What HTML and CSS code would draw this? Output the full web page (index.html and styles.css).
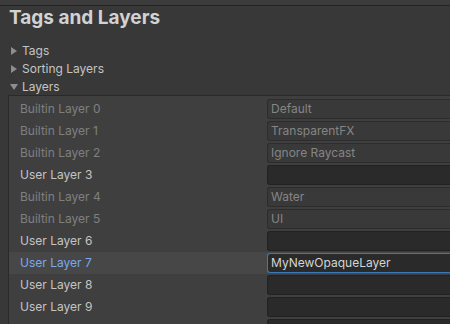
FILE: index.html
```html
<!DOCTYPE html>
<html lang="en">
<head>
  <meta charset="UTF-8">
  <link rel="stylesheet" href="styles.css">
</head>
<body>
<div class="topBar"></div>
<h1 class="title">Tags and Layers</h1>

<div class="foldouts">
    <div class="foldout">
        <svg class="arrow" width="8" height="10" viewBox="0 0 8 10"><polygon points="1,1 7,5 1,9" /></svg>
        <span>Tags</span>
    </div>
    <div class="foldout">
        <svg class="arrow" width="8" height="10" viewBox="0 0 8 10"><polygon points="1,1 7,5 1,9" /></svg>
        <span>Sorting Layers</span>
    </div>
    <div class="foldout">
        <svg class="arrow" width="8" height="10" viewBox="0 0 8 10"><polygon points="0,2 8,2 4,8" /></svg>
        <span>Layers</span>
    </div>
</div>

<div class="layerList">
    <div class="layerRow builtin">
        <span class="layerLabel">Builtin Layer 0</span>
        <div class="layerField">Default</div>
    </div>
    <div class="layerRow builtin">
        <span class="layerLabel">Builtin Layer 1</span>
        <div class="layerField">TransparentFX</div>
    </div>
    <div class="layerRow builtin">
        <span class="layerLabel">Builtin Layer 2</span>
        <div class="layerField">Ignore Raycast</div>
    </div>
    <div class="layerRow">
        <span class="layerLabel">User Layer 3</span>
        <div class="layerField"></div>
    </div>
    <div class="layerRow builtin">
        <span class="layerLabel">Builtin Layer 4</span>
        <div class="layerField">Water</div>
    </div>
    <div class="layerRow builtin">
        <span class="layerLabel">Builtin Layer 5</span>
        <div class="layerField">UI</div>
    </div>
    <div class="layerRow">
        <span class="layerLabel">User Layer 6</span>
        <div class="layerField"></div>
    </div>
    <div class="layerRow selected">
        <span class="layerLabel">User Layer 7</span>
        <div class="layerField">MyNewOpaqueLayer</div>
    </div>
    <div class="layerRow">
        <span class="layerLabel">User Layer 8</span>
        <div class="layerField"></div>
    </div>
    <div class="layerRow">
        <span class="layerLabel">User Layer 9</span>
        <div class="layerField"></div>
    </div>
    <!-- next row only peeks in at the bottom edge -->
    <div class="layerRow">
        <span class="layerLabel"></span>
        <div class="layerField"></div>
    </div>
</div>
</body>
</html>
```

FILE: styles.css
```css
body {
    margin: 0;
    padding: 0;
    height: 324px;
    overflow: hidden;
    background-color: #383838;
    font-family: 'Inter', 'Noto Sans', sans-serif;
    font-size: 12px;
    color: #c4c4c4;
}
.topBar {
    height: 5px;
    background-color: #3c3c3c;
    border-bottom: 1px solid #232323;
}
.title {
    margin: 0 0 0 9px;
    font-size: 19px;
    line-height: 23px;
    font-weight: 700;
    color: #d2d2d2;
}
.foldouts {
    margin-top: 13px;
}
.foldout {
    display: flex;
    align-items: center;
    height: 18px;
    line-height: 18px;
    padding-left: 10px;
}
.arrow {
    fill: #8e8e8e;
    margin-right: 4px;
}
.layerList {
    margin-left: 8px;
    margin-top: -1px;
    padding-top: 2px;
    background-color: #3f3f3f;
    border-top: 1px solid #2a2a2a;
    border-left: 1px solid #2a2a2a;
}
.layerRow {
    display: grid;
    grid-template-columns: 258px 1fr;
    align-items: center;
    height: 22px;
    line-height: 22px;
}
.layerLabel {
    padding-left: 11px;
    color: #c4c4c4;
}
.layerField {
    height: 18px;
    line-height: 18px;
    padding-left: 3px;
    border: 1px solid #212121;
    border-right: none;
    border-radius: 3px 0 0 3px;
    background-color: #2a2a2a;
    color: #d4d4d4;
}
.builtin .layerLabel {
    color: #7f7f7f;
}
.builtin .layerField {
    background-color: #393939;
    border-color: #2c2c2c;
    color: #858585;
}
.selected {
    background-color: #474747;
}
.selected .layerLabel {
    color: #7aa9ec;
}
.selected .layerField {
    border-color: #3a79bb;
}
```
